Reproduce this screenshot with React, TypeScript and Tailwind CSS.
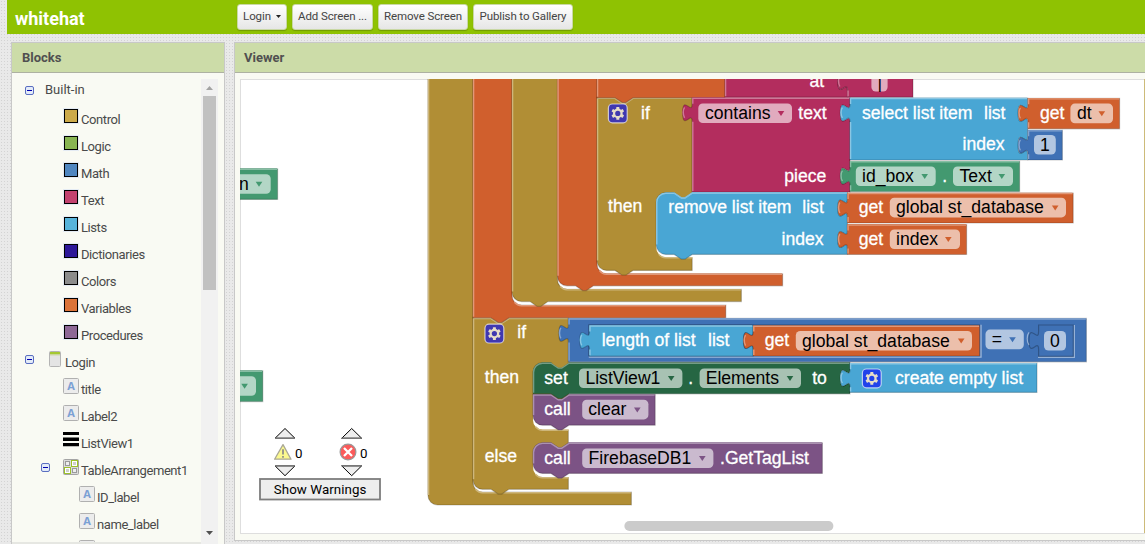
import React from "react";

const OLIVE = "#b18e35";
const ORANGE = "#d05f2d";
const PINK = "#b32d5e";
const SKY = "#49a6d4";
const GREEN = "#439970";
const FOREST = "#266643";
const PURPLE = "#7c5385";
const BLUE = "#3f71b5";

const NOTCH_R = "l7.2 4.8 3.6 0 7.2 -4.8";
const NOTCH_L = "l-7.2 4.8 -3.6 0 -7.2 -4.8";
const SOCKET = "v6 c0 12 -9.6 -9.6 -9.6 9 s9.6 -3 9.6 9";
const PLUG = "c0 -12 -9.6 9.6 -9.6 -9 s9.6 3 9.6 -9";

/* Embossed piece: fill, thin dark rim, then a light line on the upper-left edges. */
function Piece({ d, light, color }: { d: string; light: string; color: string }) {
  return (
    <g>
      <path d={d} fill={color} />
      <path d={d} fill="none" stroke="#000" strokeOpacity={0.2} strokeWidth={1.2} />
      <path d={light} fill="none" stroke={color} strokeWidth={1.6} />
      <path d={light} fill="none" stroke="#fff" strokeOpacity={0.36} strokeWidth={1.4} />
    </g>
  );
}

/* Value block with an output plug on its left side. */
function Value({ x, y, r, b, color, sockets = [] }: { x: number; y: number; r: number; b: number; color: string; sockets?: number[] }) {
  const right = sockets.map((s) => `V${s} ${SOCKET}`).join(" ");
  const d = `M${x} ${y} H${r} ${right} V${b} H${x} V${y + 24} ${PLUG} Z`;
  const light = `M${x + 0.6} ${b - 1} V${y + 24} M${x - 7.6} ${y + 20} c-1.8 -3 -1.8 -8 0 -10.5 M${x + 0.6} ${y + 6} V${y + 0.6} H${r - 0.6}`;
  return <Piece d={d} light={light} color={color} />;
}

/* Statement block with notch on top and bump below. */
function Stmt({ x, y, r, b, color, roundTop = true, roundBottom = true, sockets = [] }: { x: number; y: number; r: number; b: number; color: string; roundTop?: boolean; roundBottom?: boolean; sockets?: number[] }) {
  const right = sockets.map((s) => `V${s} ${SOCKET}`).join(" ");
  const start = roundTop ? `M${x} ${y + 9.6} a9.6 9.6 0 0 1 9.6 -9.6` : `M${x} ${y}`;
  const end = roundBottom ? `H${x + 9.6} a9.6 9.6 0 0 1 -9.6 -9.6` : `H${x}`;
  const d = `${start} H${x + 18} ${NOTCH_R} H${r} ${right} V${b} H${x + 36} ${NOTCH_L} ${end} Z`;
  const ltop = roundTop ? `V${y + 10} a9 9 0 0 1 9 -9.4` : `V${y + 0.6}`;
  const light = `M${x + 0.6} ${b - (roundBottom ? 10 : 1)} ${ltop} H${x + 18} ${NOTCH_R} H${r - 0.6}`;
  return <Piece d={d} light={light} color={color} />;
}

/* Long spine with one lower arm, running up beyond the visible area. */
function Spine({ x, inner, armTop, armBottom, r, color, round = true, bump = true }: { x: number; inner: number; armTop: number; armBottom: number; r: number; color: string; round?: boolean; bump?: boolean }) {
  const end = round ? `H${x + 9.6} a9.6 9.6 0 0 1 -9.6 -9.6` : `H${x}`;
  const d = `M${x} 60 H${inner} V${armTop - 9.6} a9.6 9.6 0 0 0 9.6 9.6 H${r} V${armBottom} ${bump ? `H${x + 36} ${NOTCH_L}` : ""} ${end} Z`;
  const light = `M${x + 0.6} ${armBottom - (round ? 10 : 1)} V60 M${inner + 2.5} ${armTop - 3} a9.6 9.6 0 0 0 7 3.5 H${r - 0.6}`;
  return <Piece d={d} light={light} color={color} />;
}

/* Opening left under the last block of a statement mouth. */
function Mouth({ x, y, r }: { x: number; y: number; r: number }) {
  return (
    <g>
      <path d={`M${x} ${y - 14} V${y - 9.6} a9.6 9.6 0 0 0 9.6 9.6 H${r} V${y - 14} Z`} fill="#fff" />
      <path d={`M${x + 2.5} ${y - 3} a9.6 9.6 0 0 0 7 3.5 H${r - 0.6}`} fill="none" stroke="#cdb67a" strokeWidth={1.4} />
    </g>
  );
}

function T({ x, y, children, dark }: { x: number; y: number; children: React.ReactNode; dark?: boolean }) {
  return (
    <text x={x} y={y} fill={dark ? "#000" : "#fff"} stroke={dark ? "none" : "#fff"} strokeWidth={dark ? 0 : 0.3}>
      {children}
    </text>
  );
}

function Field({ x, y, r, text, tx, tri, color }: { x: number; y: number; r: number; text: string; tx: number; tri?: number; color: string }) {
  return (
    <g>
      <rect x={x} y={y} width={r - x} height={19.6} rx={4.5} fill="#fff" fillOpacity={0.6} />
      {text !== "" && <T x={tx} y={y + 15.6} dark>{text}</T>}
      {tri !== undefined && <path d={`M${tri - 3.3} ${y + 7.6} h6.6 l-3.3 5z`} fill={color} />}
    </g>
  );
}

function Gear({ x, y, color }: { x: number; y: number; color: string }) {
  return (
    <g>
      <rect x={x + 0.6} y={y + 0.6} width={18.8} height={18.8} rx={4} fill={color} stroke="#fff" strokeOpacity={0.65} strokeWidth={1.2} />
      <g transform={`translate(${x + 10} ${y + 10})`} fill="#e6dcc8">
        {[0, 60, 120].map((a) => (
          <rect key={a} x={-1.5} y={-6.4} width={3} height={12.8} rx={0.5} transform={`rotate(${a})`} />
        ))}
        <circle r={4.8} />
        <circle r={2.6} fill={color} />
      </g>
    </g>
  );
}

function Inset({ x, y, r, b }: { x: number; y: number; r: number; b: number }) {
  return (
    <g fill="none" strokeWidth={1.3}>
      <path d={`M${x - 0.6} ${b} V${y - 0.6} H${r}`} stroke="#000" strokeOpacity={0.22} />
      <path d={`M${x - 0.6} ${b + 1} H${r + 1} V${y - 0.6}`} stroke="#fff" strokeOpacity={0.5} />
    </g>
  );
}

function Indicator({ x, kind }: { x: number; kind: "warning" | "error" }) {
  return (
    <g>
      <path d={`M${x - 10} 438.3 L${x} 428.5 L${x + 10} 438.3Z`} fill="#eee" stroke="#000" strokeWidth={1} />
      <path d={`M${x - 10} 465.8 L${x} 475.7 L${x + 10} 465.8Z`} fill="#eee" stroke="#000" strokeWidth={1} />
      <path d={`M${x - 10} 438.3 H${x + 10} M${x - 10} 465.8 H${x + 10}`} stroke="#777" strokeWidth={1.6} />
      {kind === "warning" ? (
        <g>
          <path d="M283 444.6 L291 459.2 H274.6Z" fill="#fbf98f" stroke="#aaa896" strokeWidth={1.3} strokeLinejoin="round" />
          <path d="M283 449.2v5.4M283 456v1.8" stroke="#96968a" strokeWidth={1.9} />
        </g>
      ) : (
        <g>
          <circle cx={348} cy={452} r={7.9} fill="#fb5a5a" stroke="#999" strokeWidth={1.2} />
          <path d="M344 448l8 8M352 448l-8 8" stroke="#fff" strokeWidth={2.3} />
        </g>
      )}
    </g>
  );
}

function Workspace() {
  return (
    <svg width={905} height={454} viewBox="240 79 905 454" className="block font-['Liberation_Sans',Arial,sans-serif] text-[17.6px]">
      <Value x={190} y={168.8} r={277.6} b={199.4} color={GREEN} />
      <Field x={215} y={174.2} r={270.7} text="n" tx={239} tri={259} color={GREEN} />
      <Value x={190} y={370.8} r={262.8} b={401.6} color={GREEN} />
      <Field x={215} y={376.2} r={256} text="" tx={239} tri={244.6} color={GREEN} />

      <Spine x={428} inner={473} armTop={492.2} armBottom={505} r={631.4} color={OLIVE} bump={false} />
      <Stmt x={473} y={318} r={568.4} b={489.3} color={OLIVE} roundTop={false} />
      <Spine x={473} inner={512} armTop={305.2} armBottom={317.8} r={725.8} color={ORANGE} round={false} />
      <Spine x={512} inner={557.5} armTop={289.4} armBottom={301.6} r={741.4} color={OLIVE} />
      <Spine x={557.5} inner={597} armTop={273.8} armBottom={285.8} r={782.6} color={ORANGE} />

      <Stmt x={597} y={97.8} r={692.2} b={270.4} color={OLIVE} roundTop={false} />
      <Stmt x={597} y={60} r={725} b={97.8} color={ORANGE} roundTop={false} roundBottom={false} />
      <Value x={725} y={30} r={847.5} b={97.2} color={PINK} sockets={[66.5]} />
      <Value x={847.5} y={66.5} r={913} b={97.2} color={PINK} />
      <T x={809.5} y={86.8}>at</T>
      <Field x={871.4} y={72} r={887.6} text="|" tx={877.5} color={PINK} />

      <Mouth x={656.2} y={257.4} r={693.2} />
      <Stmt x={656.2} y={192.6} r={847.4} b={254.4} color={SKY} sockets={[193, 224.5]} />
      <Value x={692.2} y={97.8} r={850} b={192} color={PINK} sockets={[98, 161]} />
      <path d="M674.2 192.6 l7.2 4.8 3.6 0 7.2 -4.8" fill={OLIVE} />
      <path d="M674.2 193 l7.2 4.8 3.6 0 7.2 -4.8 H847" fill="none" stroke="#7fc0e2" strokeWidth={1.3} />
      <Value x={850} y={98} r={1027.6} b={160} color={SKY} sockets={[98.3, 130.3]} />
      <Value x={1028} y={98.3} r={1119.6} b={128.8} color={ORANGE} />
      <Value x={1028} y={130.3} r={1062.4} b={160} color={BLUE} />
      <Value x={850} y={161.2} r={1019.6} b={191.6} color={GREEN} />
      <Value x={847.5} y={193} r={1073.2} b={223} color={ORANGE} />
      <Value x={847.5} y={224.5} r={966.6} b={254.5} color={ORANGE} />

      <Gear x={607.8} y={103.4} color="#4038b0" />
      <T x={641} y={119}>if</T>
      <Field x={698.3} y={103.4} r={792} text="contains" tx={705} tri={781} color={PINK} />
      <T x={798.3} y={119}>text</T>
      <T x={862} y={119}>select list item</T>
      <T x={984} y={119}>list</T>
      <T x={1040} y={119}>get</T>
      <Field x={1070.4} y={103.6} r={1113} text="dt" tx={1077} tri={1101.8} color={ORANGE} />
      <T x={962.5} y={150.2}>index</T>
      <Field x={1034} y={134.9} r={1055.8} text="1" tx={1040} color={BLUE} />
      <T x={784.3} y={182}>piece</T>
      <Field x={855.8} y={166.5} r={935.7} text="id_box" tx={862} tri={924.7} color={GREEN} />
      <T x={942.3} y={182}>.</T>
      <Field x={953} y={166.5} r={1013} text="Text" tx={959.5} tri={1001.8} color={GREEN} />
      <T x={608} y={212}>then</T>
      <T x={668.3} y={213.2}>remove list item</T>
      <T x={802.3} y={213.2}>list</T>
      <T x={858.8} y={213.2}>get</T>
      <Field x={889.8} y={197.8} r={1066} text="global st_database" tx={896} tri={1055.2} color={ORANGE} />
      <T x={781.5} y={245}>index</T>
      <T x={858.8} y={245}>get</T>
      <Field x={889.8} y={229.4} r={960} text="index" tx={896} tri={948.3} color={ORANGE} />

      <Mouth x={533} y={429.8} r={569.4} />
      <Mouth x={533} y={477.2} r={569.4} />
      <path d="M568.9 362 H660 V442.5 H568.9Z" fill="#fff" />
      <Stmt x={533} y={394.4} r={655.2} b={425.2} color={PURPLE} roundTop={false} />
      <Stmt x={533} y={362.6} r={850} b={393.8} color={FOREST} roundBottom={false} sockets={[363.2]} />
      <Stmt x={533} y={442.8} r={822.4} b={473.4} color={PURPLE} />
      <Value x={568.5} y={318.4} r={1086.4} b={361.8} color={BLUE} />
      <path d="M551 362.6 l7.2 4.8 3.6 0 7.2 -4.8" fill={OLIVE} />
      <Inset x={589.4} y={325.4} r={980} b={356.2} />
      <Value x={589.4} y={325.4} r={753} b={356.2} color={SKY} sockets={[325.6]} />
      <Value x={753.2} y={325.6} r={979.6} b={356} color={ORANGE} />
      <path d="M1038.6 357 V349.5 c0 -12 -9.6 9.6 -9.6 -9 s9.6 3 9.6 -9 V325 H1073.3 V356.4 H1039" fill="none" stroke="#000" strokeOpacity={0.25} strokeWidth={1.2} />
      <path d="M1038 357.4 H1074.4 V325 M1029 345 c-2.6 -3 -2.2 -10 0 -12.6" fill="none" stroke="#fff" strokeOpacity={0.45} strokeWidth={1.2} />
      <Value x={850} y={363.2} r={1037} b={392.4} color={SKY} />

      <Gear x={484.4} y={323.6} color="#4038b0" />
      <T x={517.3} y={338.2}>if</T>
      <T x={601.7} y={345.6}>length of list</T>
      <T x={708} y={345.6}>list</T>
      <T x={764.7} y={345.6}>get</T>
      <Field x={795.8} y={331} r={972} text="global st_database" tx={802} tri={961.2} color={ORANGE} />
      <Field x={985.5} y={329.6} r={1023.8} text="=" tx={991.8} tri={1012.5} color={BLUE} />
      <Field x={1044} y={331} r={1066} text="0" tx={1050} color={BLUE} />
      <T x={484.8} y={382.8}>then</T>
      <T x={544.3} y={383.6}>set</T>
      <Field x={579} y={368.4} r={682.4} text="ListView1" tx={585.4} tri={671.2} color={FOREST} />
      <T x={688.3} y={383.6}>.</T>
      <Field x={699.6} y={368.4} r={801} text="Elements" tx={705.7} tri={790} color={FOREST} />
      <T x={812.2} y={383.6}>to</T>
      <Gear x={861.8} y={368.4} color="#2142ea" />
      <T x={895} y={383.8}>create empty list</T>
      <T x={544.3} y={415}>call</T>
      <Field x={582.2} y={399.8} r={648.4} text="clear" tx={588.2} tri={637.3} color={PURPLE} />
      <T x={484.8} y={461.8}>else</T>
      <T x={544.3} y={463.8}>call</T>
      <Field x={582.2} y={448.5} r={713.4} text="FirebaseDB1" tx={588.6} tri={702.3} color={PURPLE} />
      <T x={720} y={463.8}>.GetTagList</T>

      <Indicator x={285} kind="warning" />
      <Indicator x={351.7} kind="error" />
      <g className="font-[Roboto,sans-serif] text-[13.33px]">
        <text x={295} y={458}>0</text>
        <text x={360} y={458}>0</text>
        <rect x={260} y={479} width={120} height={20.5} fill="#eee" stroke="#7d7d7d" strokeWidth={1.8} />
        <text x={273.8} y={494} textLength={92.5}>Show Warnings</text>
      </g>
      <rect x={624.4} y={521} width={209} height={10} rx={5} fill="#cbcbcb" />
      <path d="M1144.5 79V533" stroke="#cdbb79" />
    </svg>
  );
}

function Toggle() {
  return (
    <svg width={9} height={9} viewBox="0 0 9 9" className="block">
      <rect x={0.5} y={0.5} width={8} height={8} rx={1.5} fill="#e3ebf8" stroke="#5a6ec0" />
      <path d="M2 4.5h5" stroke="#0000b0" />
    </svg>
  );
}

function TreeIcon({ kind }: { kind: string }) {
  if (kind === "screen")
    return (
      <svg width={16} height={16} viewBox="0 0 16 16" className="block">
        <rect x={0.5} y={0.5} width={11} height={15} rx={1} fill="#e4e4e4" stroke="#b4b4b4" />
        <path d="M1 1h10v2.500H1z" fill="#a5c832" />
        <path d="M1 3.500h10v1H1z" fill="#cfd9a8" />
      </svg>
    );
  if (kind === "label")
    return (
      <svg width={16} height={16} viewBox="0 0 16 16" className="block">
        <rect x={0.5} y={0.5} width={15} height={15} rx={1} fill="#ececec" stroke="#b0b0b0" />
        <text x={8} y={11.8} textAnchor="middle" fill="#7ba0d4" className="font-['Open_Sans',sans-serif] text-[11px] font-bold tracking-normal">A</text>
      </svg>
    );
  if (kind === "list")
    return (
      <svg width={16} height={16} viewBox="0 0 16 16" className="block">
        <path d="M0 0h16v3H0zM0 5.5h16v3.5H0zM0 11h16v3.2H0z" />
      </svg>
    );
  if (kind === "table")
    return (
      <svg width={16} height={16} viewBox="0 0 16 16" className="block">
        <rect x={0.5} y={0.5} width={15} height={15} rx={1} fill="#dcdcdc" stroke="#a4a4a4" />
        <path d="M8 1h7v7H8zM1 8h7v7H1z" fill="#9cc12a" />
        <rect x={2.5} y={2.5} width={4} height={4} fill="#eee" stroke="#9a9a9a" />
        <rect x={9.5} y={9.5} width={4} height={4} fill="#eee" stroke="#9a9a9a" />
        <rect x={9.5} y={2.5} width={4} height={4} fill="#cfcfcf" stroke="#fff" />
        <rect x={2.5} y={9.5} width={4} height={4} fill="#cfcfcf" stroke="#fff" />
      </svg>
    );
  return (
    <svg width={16} height={16} viewBox="0 0 16 16" className="block">
      <rect width={16} height={16} fill="#e4ebf4" />
      <rect x={1.5} y={1.5} width={13} height={13} fill={kind} stroke="#000" />
    </svg>
  );
}

const rows: { label: string; icon: string; depth: number; open?: boolean }[] = [
  { label: "Control", icon: "#ccaa4a", depth: 1 },
  { label: "Logic", icon: "#88b552", depth: 1 },
  { label: "Math", icon: "#4f86c0", depth: 1 },
  { label: "Text", icon: "#c3426f", depth: 1 },
  { label: "Lists", icon: "#57b4db", depth: 1 },
  { label: "Dictionaries", icon: "#2d1799", depth: 1 },
  { label: "Colors", icon: "#8c8c8c", depth: 1 },
  { label: "Variables", icon: "#db7339", depth: 1 },
  { label: "Procedures", icon: "#8e6896", depth: 1 },
  { label: "Login", icon: "screen", depth: 0, open: true },
  { label: "title", icon: "label", depth: 1 },
  { label: "Label2", icon: "label", depth: 1 },
  { label: "ListView1", icon: "list", depth: 1 },
  { label: "TableArrangement1", icon: "table", depth: 1, open: true },
  { label: "ID_label", icon: "label", depth: 2 },
  { label: "name_label", icon: "label", depth: 2 },
];

function ToolButton({ children, className }: { children: React.ReactNode; className: string }) {
  return (
    <button className={`flex h-[26px] shrink-0 items-center justify-center rounded-[3px] border border-[#c9d8a5] bg-linear-to-b from-white to-[#e6e6e6] pb-px text-[11.5px] tracking-[-0.12px] whitespace-nowrap text-[#444] shadow-[0_1px_1px_rgba(0,0,0,0.2)] ${className}`}>
      {children}
    </button>
  );
}

export default function App() {
  return (
    <div className="flex h-[544px] w-[1145px] flex-col overflow-hidden bg-[#e9e9e9] bg-[radial-gradient(#d3d3d3_0.7px,transparent_0.8px)] bg-size-[3px_3px] font-[Roboto,sans-serif] text-[13px] text-[#4a4a4a]">
      <header className="ml-[7px] flex h-[34px] shrink-0 items-start bg-[#8fc202]">
        <div className="w-[230px] pt-[7px] pl-2 text-[18px] leading-6 font-bold text-white">whitehat</div>
        <div className="flex gap-[5px] pt-1">
          <ToolButton className="w-[50px] gap-[5px]">
            Login
            <svg width={5} height={3} viewBox="0 0 5 3"><path d="M0 0h5L2.500 3z" fill="#222" /></svg>
          </ToolButton>
          <ToolButton className="w-[81px]">Add Screen ...</ToolButton>
          <ToolButton className="w-[90px]">Remove Screen</ToolButton>
          <ToolButton className="w-[100px]">Publish to Gallery</ToolButton>
        </div>
      </header>

      <main className="flex min-h-0 flex-1 gap-[9px] pt-2 pl-[11px]">
        <section className="flex w-[214px] shrink-0 flex-col border-x border-t border-[#c8c8c8] bg-[#f9faf3]">
          <h2 className="h-[30px] shrink-0 border-b border-[#adb1a2] bg-[#ccdca8] pl-[10px] text-[13px] leading-[29px] font-bold text-[#505050]">Blocks</h2>
          <div className="flex min-h-0 flex-1 pt-[6px]">
            <div className="min-w-0 flex-1 overflow-hidden border-b-2 border-[#e6e7e2]">
              <div className="flex h-[27px] items-start gap-[11px] pl-[13px]">
                <div className="pt-[7px]"><Toggle /></div>
                <span className="pt-[2px] leading-[18px]">Built-in</span>
              </div>
              {rows.map((row) => {
                const pad = row.depth === 0 ? "pl-[13px]" : row.open ? "pl-[29px]" : row.depth === 1 ? "pl-[51px]" : "pl-[67px]";
                return (
                  <div key={row.label} className={`flex h-[27px] items-start ${pad}`}>
                    {row.open && <div className={row.depth === 0 ? "pt-[6px] pr-[15px]" : "pt-[6px] pr-[13px]"}><Toggle /></div>}
                    <div className={row.depth === 0 ? "flex items-start" : "flex items-start gap-[2px]"}>
                      <div className="pt-[2px]"><TreeIcon kind={row.icon} /></div>
                      <span className="pt-[5px] leading-[18px] tracking-[-0.42px] whitespace-nowrap">{row.label}</span>
                    </div>
                  </div>
                );
              })}
              <div className="pt-[2px] pl-[67px]"><TreeIcon kind="label" /></div>
            </div>
            <div className="mr-[6px] flex w-[17px] shrink-0 flex-col items-center justify-between bg-[#f1f1f1]">
              <div className="flex flex-col items-center">
                <svg width={17} height={17} viewBox="0 0 17 17" className="block"><path d="M5 11h7L8.500 7z" fill="#a3a3a3" /></svg>
                <div className="h-[194px] w-[13px] bg-[#c1c1c1]" />
              </div>
              <svg width={17} height={19} viewBox="0 0 17 19" className="block"><path d="M5 6h7L8.500 10z" fill="#505050" /></svg>
            </div>
          </div>
        </section>

        <section className="mb-[3px] flex min-w-0 flex-1 flex-col border-y border-l border-[#c8c8c8] bg-[#f9faf3]">
          <h2 className="h-[30px] shrink-0 border-b border-[#adb1a2] bg-[#ccdca8] pl-[9px] text-[13px] leading-[29px] font-bold text-[#505050]">Viewer</h2>
          <div className="mt-[6px] ml-[5px] h-[455px] overflow-hidden bg-white shadow-[inset_1px_1px_#dedede,inset_0_-1px_#dedede]">
            <Workspace />
          </div>
        </section>
      </main>
    </div>
  );
}
